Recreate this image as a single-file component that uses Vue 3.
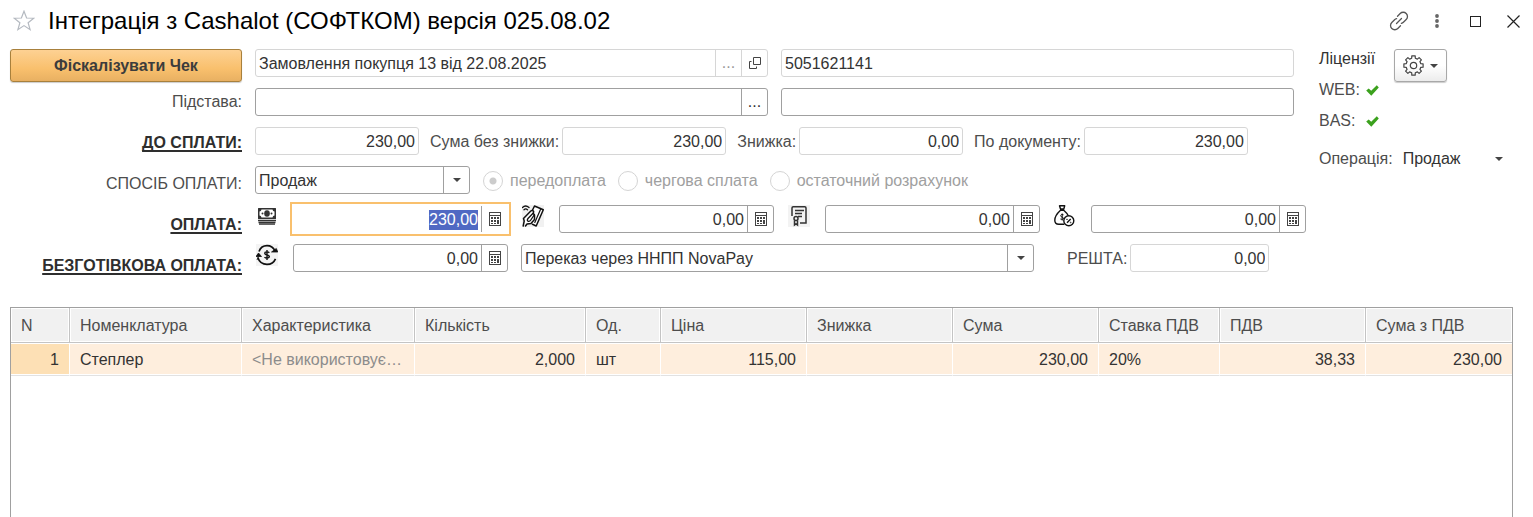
<template>
  <main class="window">
    <header class="title-bar">
      <button class="icon-btn star" aria-label="Додати в обране">
        <svg width="22" height="22" viewBox="0 0 22 22" fill="none" stroke="#b4b9c0" stroke-width="1.2">
          <path d="M11 1.2l2.6 6.8 7.2.2-5.7 4.5 2 7-6.1-4.1-6.1 4.1 2-7L1.200 8.200l7.200-.2z" />
        </svg>
      </button>
      <h1>Інтеграція з Cashalot (СОФТКОМ) версія 025.08.02</h1>
      <div class="actions">
        <button class="icon-btn" aria-label="Посилання">
          <svg width="20" height="20" viewBox="0 0 20 20" fill="none" stroke="#555" stroke-width="1.3" stroke-linecap="round">
            <path d="M8.500 5.200l2.700-2.700a4.200 4.200 0 0 1 6 0 4.200 4.200 0 0 1 0 6l-2.800 2.800a4 4 0 0 1-2 1.100" />
            <path d="M11.500 14.800l-2.700 2.700a4.200 4.200 0 0 1-6 0 4.200 4.200 0 0 1 0-6l2.800-2.800a4 4 0 0 1 2-1.100" />
            <path d="M7.500 12.500l5-5" />
          </svg>
        </button>
        <button class="icon-btn" aria-label="Меню">
          <svg width="6" height="16" viewBox="0 0 6 16" fill="#666">
            <circle cx="3" cy="3" r="1.900" /><circle cx="3" cy="8" r="1.900" /><circle cx="3" cy="13" r="1.900" />
          </svg>
        </button>
        <button class="icon-btn" aria-label="Розгорнути">
          <svg width="11" height="11" viewBox="0 0 11 11" fill="none" stroke="#222">
            <rect x=".5" y=".5" width="10" height="10" />
          </svg>
        </button>
        <button class="icon-btn" aria-label="Закрити">
          <svg width="13" height="13" viewBox="0 0 13 13" fill="none" stroke="#222" stroke-width="1.200">
            <path d="M.5.5l12 12M12.500.5l-12 12" />
          </svg>
        </button>
      </div>
    </header>

    <section class="form">
      <div class="captions">
        <button class="primary">Фіскалізувати Чек</button>
        <div class="caption-list">
          <label for="basis">Підстава:</label>
          <label for="to-pay" class="strong">ДО СПЛАТИ:</label>
          <label for="pay-kind">СПОСІБ ОПЛАТИ:</label>
          <label for="pay-cash" class="strong">ОПЛАТА:</label>
          <label for="pay-cashless" class="strong">БЕЗГОТІВКОВА ОПЛАТА:</label>
        </div>
      </div>

      <div class="fields">
        <div class="row">
          <div class="field wide muted">
            <input type="text" aria-label="Документ" value="Замовлення покупця 13 від 22.08.2025" readonly>
            <button class="addon dots" aria-label="Вибрати документ">...</button>
            <button class="addon" aria-label="Відкрити документ">
              <svg width="12" height="12" viewBox="0 0 12 12" fill="none" stroke="#444">
                <path d="M4.500.5h7v7h-7zM2.500 4.500h-2v7h7v-2" />
              </svg>
            </button>
          </div>
          <div class="field wide muted">
            <input type="text" aria-label="Код" value="5051621141" readonly>
          </div>
        </div>

        <div class="row">
          <div class="field wide">
            <input id="basis" type="text">
            <button class="addon dots" aria-label="Вибрати підставу">...</button>
          </div>
          <div class="field wide">
            <input type="text" aria-label="Коментар">
          </div>
        </div>

        <div class="row totals">
          <div v-for="t in totals" :key="t.id" class="labelled">
            <label v-if="t.label" :for="t.id">{{ t.label }}</label>
            <div class="field total muted">
              <input :id="t.id" type="text" class="num" :value="t.value" readonly>
            </div>
          </div>
        </div>

        <div class="row">
          <div class="field amount">
            <select id="pay-kind">
              <option>Продаж</option>
            </select>
            <span class="addon"><i class="caret"></i></span>
          </div>
          <div class="radios">
            <label v-for="(s, i) in stages" :key="s">
              <input type="radio" name="stage" :checked="i === 0" disabled>{{ s }}
            </label>
          </div>
        </div>

        <div class="row">
          <div v-for="p in payments" :key="p.id" class="payment">
            <svg v-if="p.icon === 'cash'" class="pic" viewBox="0 0 22 22">
              <path fill="#333" fill-rule="evenodd" d="M2.500 3h17q.5 0 .5.500v10q0 .5-.5.500h-17q-.5 0-.5-.5v-10q0-.5.500-.5zM5.500 4.500q-.3 1.800-2 2v4q1.700.2 2 2h11q.3-1.800 2-2v-4q-1.700-.2-2-2z" />
              <ellipse cx="11" cy="8.500" rx="2.800" ry="3.300" fill="#333" />
              <circle cx="6.500" cy="8.500" r="1" fill="#333" /><circle cx="15.500" cy="8.500" r="1" fill="#333" />
              <path d="M2 15.500h18M2.500 17.500h17M3 19.200h16" stroke="#333" stroke-width="1.300" />
            </svg>
            <svg v-else-if="p.icon === 'card'" class="pic" viewBox="0 0 22 22" fill="none" stroke="#111" stroke-width="1.500" stroke-linejoin="round" stroke-linecap="round">
              <path fill="#f1f1f1" stroke="none" d="M0 0h22v22H0z" />
              <path fill="#fff" d="M12.500 1L21.300 4.800 14.200 21 10.500 19.300M12.500 1L9.800 6.500" />
              <path d="M18.500 4.500L12.800 17.500" stroke-width="1.200" />
              <path fill="#fff" d="M1.200 21l1-5L1.500 13.500 8.800 6q1.500-1.300 2.700.2.400.8-.3 2L12.500 10v4.500l-3.500 4-4 .5L3.500 21" />
              <path d="M10.800 8.500L6 13.500q-1.500 2 .3 2.800 1.400.4 2.500-1.300l3-4.500" stroke-width="1.300" />
              <path d="M.5 2.500q3-3 6.500 0M2 4.700q1.700-1.700 3.500 0" stroke-width="1.300" />
            </svg>
            <svg v-else-if="p.icon === 'certificate'" class="pic" viewBox="0 0 22 22" fill="none" stroke="#333" stroke-width="1.500">
              <path fill="#f3f3f3" stroke="none" d="M0 0h22v22H0z" />
              <path d="M4 11V3q0-1.200 1.200-1.200h11.600Q18 1.800 18 3v15h-6" />
              <path d="M7 5.500h9M7 8.500h7M10 11.500h4" stroke-width="1.300" />
              <circle cx="8" cy="13.500" r="2" /><path d="M6.500 15.500V20l1.500-1 1.500 1v-4.500" />
            </svg>
            <svg v-else class="pic" viewBox="0 0 22 22" fill="none" stroke="#111" stroke-width="1.400" stroke-linejoin="round">
              <path d="M5.500.8h5.200L9.800 4H6.500zM6 5.200h4.300" />
              <path d="M6.300 5.500C3 8.500.8 12 .8 15.200c0 2.800 1.500 4 4 4h5.500M10 5.500c2 1.800 3.500 3.500 4.300 5.200" />
              <path d="M9.500 9.800q-2.800-1-2.800.8 0 1.200 1.500 1.600t1.200 1.500q-.5 1.200-3 .3M8.200 8.500v7" stroke-width="1" />
              <circle cx="14.800" cy="15.800" r="5" fill="#fff" /><path d="M13 17.700l3.700-3.700" />
              <circle cx="13" cy="14.300" r=".4" stroke-width=".8" /><circle cx="16.700" cy="17.500" r=".4" stroke-width=".8" />
            </svg>
            <div class="field amount" :class="{ active: p.icon === 'cash' }">
              <input :id="p.id" :ref="p.icon === 'cash' ? 'cash' : undefined" type="text" class="num" :value="p.value" :aria-label="p.name">
              <button class="addon" aria-label="Калькулятор">
                <svg class="calc" viewBox="0 0 12 14"><path :d="calcPath" fill="#444" fill-rule="evenodd" /></svg>
              </button>
            </div>
          </div>
        </div>

        <div class="row">
          <div class="payment">
            <svg class="pic" viewBox="0 0 22 22" fill="none" stroke="#111" stroke-width="1.700">
              <path fill="#f4f4f4" stroke="none" d="M0 0h22v22H0z" />
              <path d="M3 7.500C4.500 3.500 7.500 1.700 11 1.700c3.700 0 6.500 2 8 5.300M1.800 13.500c1.300 4 4.700 6.800 9.200 6.800 3.800 0 7-2 8.500-5.500" />
              <path d="M15.500 8h6.300l-1.500-3.500zM0 12.500h5.500L2.500 9zM1 16l1.500-3.500" fill="#111" stroke-width=".8" />
              <path d="M13.300 8.800c-1-1.300-4.600-1.300-4.600.5 0 2.200 4.700 1.100 4.700 3.300 0 2-3.700 2-4.900.5M11 6v10" stroke-width="1.400" />
            </svg>
            <div class="field amount">
              <input id="pay-cashless" type="text" class="num" value="0,00">
              <button class="addon" aria-label="Калькулятор">
                <svg class="calc" viewBox="0 0 12 14"><path :d="calcPath" fill="#444" fill-rule="evenodd" /></svg>
              </button>
            </div>
          </div>
          <div class="field method">
            <select aria-label="Спосіб переказу">
              <option>Переказ через ННПП NovaPay</option>
            </select>
            <span class="addon"><i class="caret"></i></span>
          </div>
          <div class="labelled change">
            <label for="change">РЕШТА:</label>
            <div class="field muted">
              <input id="change" type="text" class="num" value="0,00" readonly>
            </div>
          </div>
        </div>
      </div>

      <aside class="side">
        <div class="side-top">
          <div class="licences">
            <span class="dark">Ліцензії</span>
            <span v-for="l in licences" :key="l" class="licence">
              {{ l }}:
              <svg width="13" height="11" viewBox="0 0 13 11"><path d="M.2 5.500l2.500-2 2.500 2.300L10.800.3l2 2.100-7.500 8.400z" fill="#3ba11d" /></svg>
            </span>
          </div>
          <button class="gear" aria-label="Налаштування">
            <svg width="21" height="21" viewBox="0 0 21 21" fill="none" stroke="#444" stroke-width="1.200" stroke-linejoin="round">
              <path :d="gearPath" />
              <circle cx="10.500" cy="10.500" r="3.200" />
            </svg>
            <i class="caret"></i>
          </button>
        </div>
        <div class="operation">
          <label for="operation">Операція:</label>
          <select id="operation">
            <option>Продаж</option>
          </select>
          <i class="caret"></i>
        </div>
      </aside>
    </section>

    <section class="grid">
      <table>
        <colgroup>
          <col v-for="c in columns" :key="c.title" :style="{ width: c.width / 15.01 + '%' }">
        </colgroup>
        <thead>
          <tr>
            <th v-for="c in columns" :key="c.title">{{ c.title }}</th>
          </tr>
        </thead>
        <tbody>
          <tr v-for="(r, i) in rows" :key="i">
            <td v-for="(c, j) in columns" :key="c.title" :class="{ num: c.num, faded: j === 2 }">{{ r[j] }}</td>
          </tr>
        </tbody>
      </table>
    </section>
  </main>
</template>

<script setup>
import { onMounted, useTemplateRef } from 'vue'

const totals = [
  { id: 'to-pay', label: '', value: '230,00' },
  { id: 'no-discount', label: 'Сума без знижки:', value: '230,00' },
  { id: 'discount', label: 'Знижка:', value: '0,00' },
  { id: 'by-document', label: 'По документу:', value: '230,00' }
]

const stages = ['передоплата', 'чергова сплата', 'остаточний розрахунок']

const payments = [
  { id: 'pay-cash', icon: 'cash', name: 'Готівка', value: '230,00' },
  { id: 'pay-card', icon: 'card', name: 'Картка', value: '0,00' },
  { id: 'pay-certificate', icon: 'certificate', name: 'Сертифікат', value: '0,00' },
  { id: 'pay-credit', icon: 'credit', name: 'Кредит', value: '0,00' }
]

const licences = ['WEB', 'BAS']

const columns = [
  { title: 'N', width: 59, num: true },
  { title: 'Номенклатура', width: 172 },
  { title: 'Характеристика', width: 173 },
  { title: 'Кількість', width: 171, num: true },
  { title: 'Од.', width: 75 },
  { title: 'Ціна', width: 146, num: true },
  { title: 'Знижка', width: 146, num: true },
  { title: 'Сума', width: 146, num: true },
  { title: 'Ставка ПДВ', width: 121 },
  { title: 'ПДВ', width: 146, num: true },
  { title: 'Сума з ПДВ', width: 146, num: true }
]

const rows = [
  ['1', 'Степлер', '<Не використовує…', '2,000', 'шт', '115,00', '', '230,00', '20%', '38,33', '230,00']
]

// frame, display line and keys
const calcPath = 'M0 0h12v14H0zM1 1v2h10V1zM1 4v9h10V4z' +
  'M2 5h2v2H2zM5 5h2v2H5zM8 5h2v2H8zM2 8h2v2H2zM5 8h2v2H5zM8 8h2v4H8zM2 11h2v1H2zM5 11h2v1H5z'

// eight teeth around the centre
const gearPoints = []
for (let i = 0; i < 8; i++) {
  for (const [r, a] of [[7.500, -14], [9.700, -10], [9.700, 10], [7.500, 14]]) {
    const t = (i * 45 + a) * Math.PI / 180
    gearPoints.push(`${(10.500 + r * Math.sin(t)).toFixed(1)} ${(10.500 - r * Math.cos(t)).toFixed(1)}`)
  }
}
const gearPath = `M${gearPoints.join('L')}z`

const cash = useTemplateRef('cash')

onMounted(() => {
  const el = Array.isArray(cash.value) ? cash.value[0] : cash.value
  el?.focus()
  el?.select()
})
</script>

<style>
body {
  background: #fff;
}
</style>

<style scoped>
.window {
  display: flex;
  flex-direction: column;
  box-sizing: border-box;
  min-height: 100vh;
  font: 16px/20px "Liberation Sans", Arial, sans-serif;
  color: #4d4d4d;
}
button, input, select {
  font: inherit;
  color: #333;
  margin: 0;
  padding: 0;
  border: 0;
  background: none;
  outline: none;
}
svg {
  display: block;
  flex: none;
}
.title-bar {
  display: flex;
  align-items: center;
  height: 42px;
  padding: 0 1px 0 13px;
}
.title-bar h1 {
  flex: 1;
  margin: 0 0 0 13px;
  font-size: 24px;
  line-height: 28px;
  font-weight: normal;
  color: #000;
}
.actions {
  display: flex;
}
.icon-btn {
  display: flex;
  justify-content: center;
  align-items: center;
}
.actions .icon-btn {
  width: 38px;
  height: 38px;
}
.form {
  display: flex;
  padding: 7px 20px 0 10px;
}
.captions {
  flex: none;
  width: 232px;
  margin-right: 13px;
}
.primary {
  display: block;
  width: 100%;
  height: 33px;
  border: 1px solid #a8803c;
  border-radius: 3px;
  background: linear-gradient(#fdd193, #f9c06d 60%, #e8b062);
  box-shadow: 0 1px 1px #ccc;
  font-weight: bold;
  color: #3c3c3c;
}
.caption-list {
  display: flex;
  flex-direction: column;
  align-items: flex-end;
  gap: 21px;
  margin-top: 10px;
}
.strong {
  font-weight: bold;
  color: #2e2e2e;
  text-decoration: underline;
  text-decoration-thickness: 2px;
  text-underline-offset: 2px;
  text-decoration-skip-ink: none;
}
.fields {
  display: flex;
  flex-direction: column;
  flex: 1;
  gap: 11px;
  min-width: 0;
}
.row {
  display: flex;
  gap: 13px;
}
.row.totals {
  gap: 11px;
}
.field {
  display: flex;
  flex: none;
  box-sizing: border-box;
  height: 28px;
  border: 1px solid #a0a0a0;
  border-radius: 3px;
}
.field input, .field select {
  flex: 1;
  min-width: 0;
  padding: 2px 3px 0;
  appearance: none;
}
.field.muted, .muted .addon {
  border-color: #d6d6d6;
}
.field.wide {
  flex: 1;
}
.addon {
  display: flex;
  flex: none;
  justify-content: center;
  align-items: center;
  box-sizing: border-box;
  width: 26px;
  border-left: 1px solid #a0a0a0;
}
.muted .dots {
  color: #999;
}
.num {
  text-align: right;
}
.total {
  width: 164px;
}
.amount {
  width: 215px;
}
.method {
  flex: 0 1 513px;
}
.active {
  border-color: transparent;
  border-radius: 0;
  outline: 2px solid #f9c06d;
  outline-offset: 1px;
}
.active input::selection {
  background: #5069c3;
  color: #fff;
}
.labelled {
  display: flex;
  align-items: center;
  flex: none;
  gap: 3px;
}
.labelled label {
  padding-top: 2px;
}
.change {
  margin-left: 20px;
}
.change .field {
  width: 139px;
}
.caret {
  width: 0;
  border: 4px solid transparent;
  border-top-color: #444;
  border-bottom: 0;
}
.radios {
  display: flex;
  gap: 12px;
  align-items: center;
  padding-top: 1px;
  color: #a0a0a0;
}
.radios label {
  display: flex;
  align-items: center;
  gap: 7px;
}
.radios input {
  appearance: none;
  box-sizing: border-box;
  width: 20px;
  height: 20px;
  border: 1px solid #d4d4d4;
  border-radius: 50%;
}
.radios input:checked {
  background: radial-gradient(circle, #ccc 3px, transparent 4px);
}
.payment {
  display: flex;
  flex: none;
  gap: 15px;
  padding-left: 1px;
}
.pic {
  width: 22px;
  height: 22px;
}
.calc {
  width: 12px;
  height: 14px;
}
.side {
  flex: none;
  width: 194px;
  margin-left: 25px;
}
.side-top {
  display: flex;
  align-items: flex-start;
}
.licences {
  display: flex;
  flex-direction: column;
  gap: 11px;
  width: 75px;
}
.licence {
  display: flex;
  align-items: center;
  justify-content: space-between;
  width: 60px;
}
.dark {
  color: #333;
}
.gear {
  display: flex;
  justify-content: space-between;
  align-items: center;
  width: 53px;
  height: 33px;
  padding: 0 8px;
  border: 1px solid #a8a8a8;
  border-radius: 3px;
  background: linear-gradient(#fff 50%, #ececec);
  box-shadow: 0 1px 1px #ccc;
}
.operation {
  display: flex;
  align-items: center;
  margin-top: 18px;
  padding-right: 10px;
}
.operation select {
  flex: 1;
  margin-left: 10px;
  appearance: none;
}
.grid {
  flex: 1;
  margin: 31px 20px 0 10px;
  border: 1px solid #a0a0a0;
  border-bottom: 0;
}
table {
  width: 100%;
  table-layout: fixed;
  border-collapse: separate;
  border-spacing: 0;
}
th, td {
  box-sizing: border-box;
  padding: 1px 10px 0;
  overflow: hidden;
  white-space: nowrap;
  text-overflow: ellipsis;
  text-align: left;
  font-weight: normal;
}
th {
  height: 35px;
  border-right: 1px solid #c4c4c4;
  border-bottom: 1px solid #c4c4c4;
  background: #f1f1f1;
  box-shadow: inset 0 0 0 1px #fff;
}
td {
  height: 33px;
  border-right: 1px solid #fff;
  border-bottom: 1px solid #e2e2e2;
  background: #feeedd;
  box-shadow: inset 0 1px #fff, inset 0 -1px #fff;
  color: #333;
}
td:first-child {
  background: #fde0b5;
}
td.num {
  text-align: right;
}
td.faded {
  color: #8c8c8c;
}
th:last-child, td:last-child {
  border-right: 0;
}
</style>
